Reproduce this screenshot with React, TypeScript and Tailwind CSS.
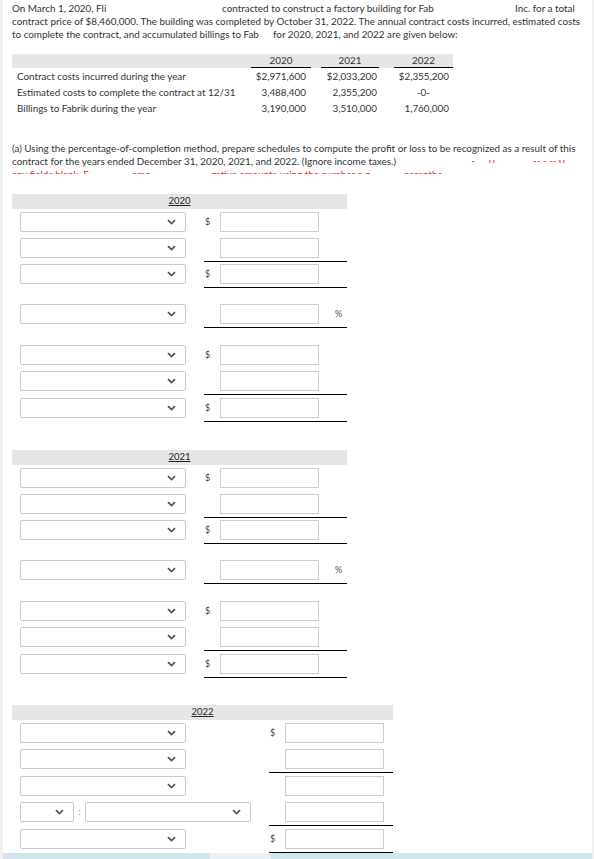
import React from "react";

const Chevron = () => (
  <svg width="9" height="6" viewBox="0 0 9 6" className="shrink-0">
    <path d="M1 1.2 L4.5 4.6 L8 1.2" fill="none" stroke="#555" strokeWidth="1.8" />
  </svg>
);

function Select({ w = "w-[166px]" }: { w?: string }) {
  return (
    <div className={`${w} h-[20px] border border-[#c9c9c9] rounded-[2px] bg-white flex items-center justify-end pr-[9px] shrink-0`}>
      <Chevron />
    </div>
  );
}

function Box() {
  return <input type="text" className="w-[99px] h-[20px] border border-[#cdcdcd] bg-white outline-none shrink-0" />;
}

function Amount({ dollar, pct, w = "w-[143px]" }: { dollar?: boolean; pct?: boolean; w?: string }) {
  return (
    <div className={`${w} flex items-center shrink-0`}>
      <span className="w-[16px] pl-[1px] text-[9px] text-[#444]">{dollar ? "$" : ""}</span>
      <Box />
      {pct && <span className="ml-[16px] text-[9px] text-[#555]">%</span>}
    </div>
  );
}

function Row({ dollar, pct }: { dollar?: boolean; pct?: boolean }) {
  return (
    <div className="flex items-center h-[20px]">
      <div className="ml-[8px]">
        <Select />
      </div>
      <div className="ml-[18px]">
        <Amount dollar={dollar} pct={pct} />
      </div>
    </div>
  );
}

const Line = ({ cls = "ml-[192px] w-[143px]" }: { cls?: string }) => (
  <div className={`${cls} h-px bg-black`} />
);

function YearHead({ year, w }: { year: string; w: string }) {
  return (
    <div className={`${w} h-[15px] bg-[#e6e6e6] flex items-center justify-center`}>
      <span className="underline text-[9.5px] text-[#222]">{year}</span>
    </div>
  );
}

function Schedule({ year }: { year: string }) {
  return (
    <div>
      <YearHead year={year} w="w-[335px]" />
      <div className="mt-[3px]">
        <Row dollar />
      </div>
      <div className="mt-[6px]">
        <Row />
      </div>
      <div className="mt-[3px]">
        <Line />
      </div>
      <div className="mt-[2px]">
        <Row dollar />
      </div>
      <div className="mt-[3px]">
        <Line />
      </div>
      <div className="mt-[16px]">
        <Row pct />
      </div>
      <div className="mt-[3px]">
        <Line />
      </div>
      <div className="mt-[17px]">
        <Row dollar />
      </div>
      <div className="mt-[6px]">
        <Row />
      </div>
      <div className="mt-[3px]">
        <Line />
      </div>
      <div className="mt-[3px]">
        <Row dollar />
      </div>
      <div className="mt-[3px]">
        <Line />
      </div>
    </div>
  );
}

function Row22({ dollar, split }: { dollar?: boolean; split?: boolean }) {
  return (
    <div className="flex items-center h-[20px]">
      {split ? (
        <div className="ml-[8px] flex items-center">
          <Select w="w-[54px]" />
          <span className="w-[11px] text-center text-[9px] text-[#777]">:</span>
          <Select w="w-[166px]" />
          <div className="ml-[18px]">
            <Amount dollar={dollar} w="w-[124px]" />
          </div>
        </div>
      ) : (
        <>
          <div className="ml-[8px]">
            <Select />
          </div>
          <div className="ml-[83px]">
            <Amount dollar={dollar} w="w-[124px]" />
          </div>
        </>
      )}
    </div>
  );
}

const dataRows = [
  { label: "Contract costs incurred during the year", v: ["$2,971,600", "$2,033,200", "$2,355,200"] },
  { label: "Estimated costs to complete the contract at 12/31", v: ["3,488,400", "2,355,200", "-0-"] },
  { label: "Billings to Fabrik during the year", v: ["3,190,000", "3,510,000", "1,760,000"] },
];

export default function App() {
  return (
    <div className="min-h-screen bg-white border-l-[3px] border-r-[2px] border-[#f1f1f1] font-['Lato','Noto_Sans',sans-serif] text-[#333]">
      <div className="px-[9px] pt-[2px]">
        <div className="text-[9.9px] leading-[13px] whitespace-nowrap">
          <div>
            <span className="inline-block w-[210px]">On March 1, 2020, Fli</span>
            <span className="inline-block w-[293px]">contracted to construct a factory building for Fab</span>
            <span>Inc. for a total</span>
          </div>
          <div>
            contract price of $8,460,000. The building was completed by October 31, 2022. The annual contract costs incurred, estimated costs
          </div>
          <div>
            <span className="inline-block w-[261px]">to complete the contract, and accumulated billings to Fab</span>
            <span>for 2020, 2021, and 2022 are given below:</span>
          </div>
        </div>

        <div className="mt-[13px] w-[441px] text-[9.9px]">
          <div className="h-[14px] bg-[#e6e6e6] flex items-stretch">
            <div className="w-[239px]" />
            <div className="w-[60px] border-b border-black flex items-center justify-center">2020</div>
            <div className="w-[10px]" />
            <div className="w-[58px] border-b border-black flex items-center justify-center">2021</div>
            <div className="w-[15px]" />
            <div className="w-[59px] border-b border-black flex items-center justify-center">2022</div>
          </div>
          {dataRows.map((r) => (
            <div key={r.label} className="flex h-[16px] items-center whitespace-nowrap">
              <div className="w-[239px] pl-[5px]">{r.label}</div>
              <div className="w-[60px] text-right pr-[5px]">{r.v[0]}</div>
              <div className="w-[10px]" />
              <div className="w-[58px] text-right pr-[2px]">{r.v[1]}</div>
              <div className="w-[15px]" />
              <div className={r.v[2] === "-0-" ? "w-[59px] text-center" : "w-[59px] text-right pr-[4px]"}>{r.v[2]}</div>
            </div>
          ))}
        </div>

        <div className="mt-[25.5px] text-[9.9px] leading-[13px] whitespace-nowrap">
          <div>
            (a) Using the percentage-of-completion method, prepare schedules to compute the profit or loss to be recognized as a result of this
          </div>
          <div className="flex items-center w-[558px]">
            <span className="shrink-0">contract for the years ended December 31, 2020, 2021, and 2022. (Ignore income taxes.)</span>
            <span className="ml-[3px] flex-1 min-w-0 h-[3px] overflow-hidden text-[#ee1c25] leading-[13px] inline-block">
              <span className="block -mt-[6px] text-right">
                "<span className="text-transparent">Round answers</span> - <span className="text-transparent">to</span> 0
                <span className="text-transparent"> decimal</span> -- - -- 0. Do not le
              </span>
            </span>
          </div>
          <div className="h-[6px] w-[430px] overflow-hidden text-[#ee1c25]">
            any fields blank. E<span className="text-transparent">nter 0 for</span> amo<span className="text-transparent">unts. Enter ne</span>gative amounts using the number e.g.
            <span className="text-transparent"> -45 or </span>parentheses e.g. (45).)
          </div>
        </div>

        <div className="mt-[20.5px]">
          <Schedule year="2020" />
        </div>
        <div className="mt-[28px]">
          <Schedule year="2021" />
        </div>

        <div className="mt-[27px]">
          <YearHead year="2022" w="w-[381px]" />
          <div className="mt-[3px]">
            <Row22 dollar />
          </div>
          <div className="mt-[6px]">
            <Row22 />
          </div>
          <div className="mt-[3px]">
            <Line cls="ml-[257px] w-[124px]" />
          </div>
          <div className="mt-[3px]">
            <Row22 />
          </div>
          <div className="mt-[6px]">
            <Row22 split />
          </div>
          <div className="mt-[3px]">
            <Line cls="ml-[257px] w-[124px]" />
          </div>
          <div className="mt-[3px]">
            <Row22 dollar />
          </div>
          <div className="mt-[3px]">
            <Line cls="ml-[257px] w-[124px]" />
          </div>
        </div>
      </div>
      <div className="flex h-[8px]">
        <div className="w-[207px] bg-[#d4e4ee]" />
        <div className="w-[61px] bg-[#e9f1f6]" />
        <div className="flex-1 bg-[#d4e4ee]" />
      </div>
    </div>
  );
}
